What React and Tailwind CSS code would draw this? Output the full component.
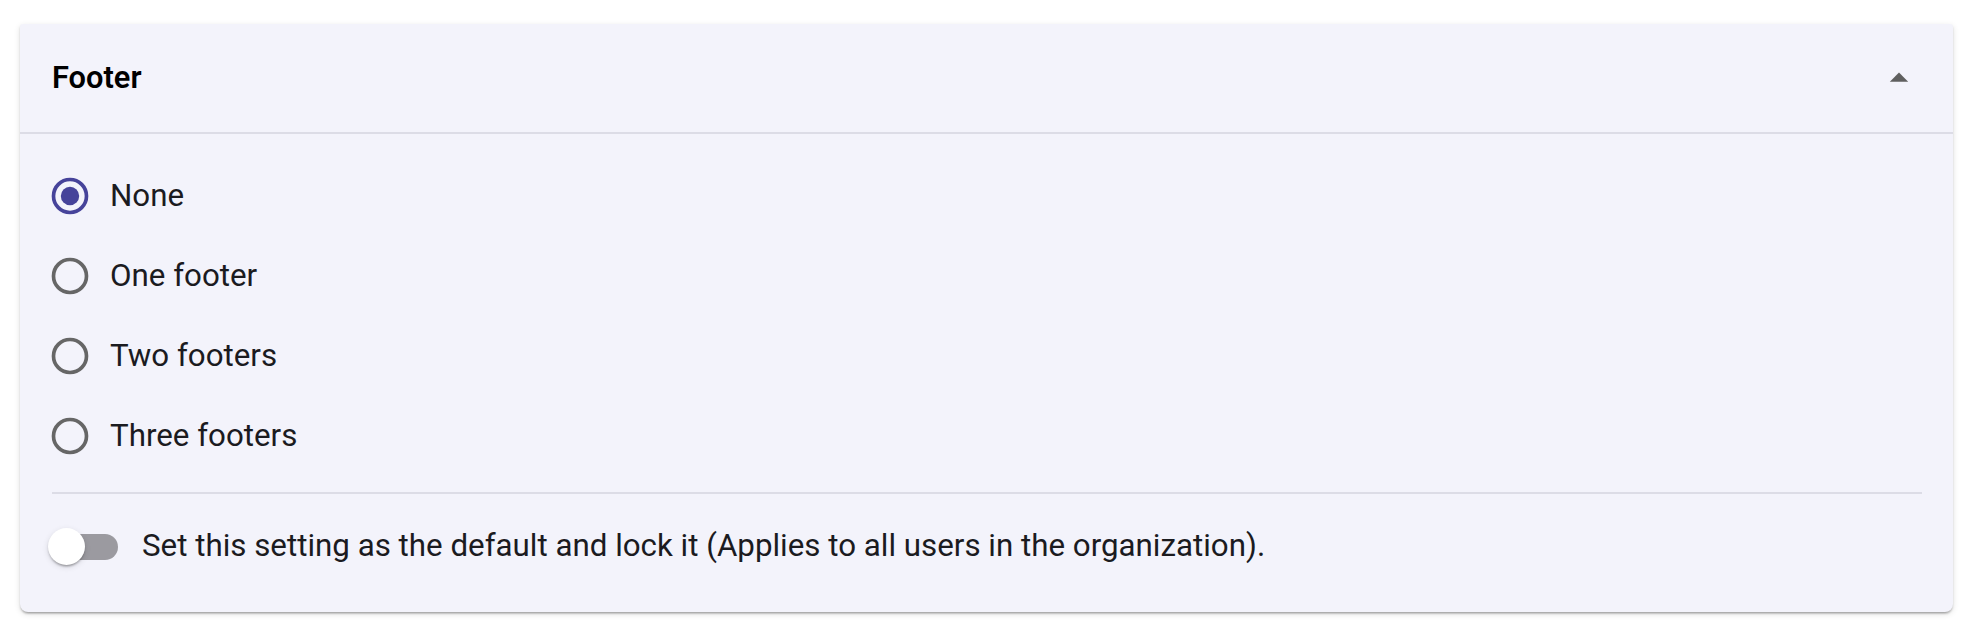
import { useState } from "react";

const options = ["None", "One footer", "Two footers", "Three footers"];

function RadioIcon({ checked }) {
  return (
    <svg viewBox="0 0 24 24" className="w-[44px] h-[44px] shrink-0">
      <circle
        cx="12"
        cy="12"
        r="9"
        fill="none"
        stroke={checked ? "#46439a" : "#666666"}
        strokeWidth="2"
      />
      {checked && <circle cx="12" cy="12" r="5" fill="#46439a" />}
    </svg>
  );
}

export default function App() {
  const [value, setValue] = useState("None");
  const [locked, setLocked] = useState(false);
  const [open, setOpen] = useState(true);

  return (
    <div className="min-h-screen bg-white pt-[24px] pl-[20px] pr-[23px] font-['Roboto','Liberation_Sans',sans-serif] text-[#1b1b1f]">
      <div className="bg-[#f3f3fb] rounded-t-[3px] rounded-b-[8px] shadow-[0_3px_2px_-2px_rgba(0,0,0,0.2),0_2px_2px_0_rgba(0,0,0,0.14),0_2px_6px_0_rgba(0,0,0,0.12)]">
        <button
          onClick={() => setOpen(!open)}
          className="w-full h-[110px] flex items-center justify-between pl-[32px] pr-[32px] border-b-2 border-[#dcdce6]"
        >
          <span className="text-[30.8px] font-semibold text-black">Footer</span>
          <svg viewBox="0 0 24 24" className="w-[44px] h-[44px]">
            <path d={open ? "m7 14 5-5 5 5z" : "m7 10 5 5 5-5z"} fill="#5f5f5f" />
          </svg>
        </button>

        {open && (
          <div className="pt-[22px] pb-[29px]">
            <div className="flex flex-col pl-[28px]">
              {options.map((opt) => (
                <label
                  key={opt}
                  onClick={() => setValue(opt)}
                  className="h-[80px] flex items-center gap-[18px] cursor-pointer"
                >
                  <RadioIcon checked={value === opt} />
                  <span className="text-[31.3px]">{opt}</span>
                </label>
              ))}
            </div>

            <div className="mt-[16px] ml-[32px] mr-[31px] h-[2px] bg-[#dcdce6]" />

            <div className="mt-[15px] h-[74px] flex items-center gap-[24px] pl-[28px]">
              <button
                onClick={() => setLocked(!locked)}
                className="relative w-[70px] h-[37px] shrink-0"
              >
                <span
                  className={
                    locked
                      ? "absolute left-[7px] top-[6px] w-[63px] h-[26px] rounded-full bg-[#a9a6dc]"
                      : "absolute left-[7px] top-[6px] w-[63px] h-[26px] rounded-full bg-[#9b9aa0]"
                  }
                />
                <span
                  className={
                    locked
                      ? "absolute left-[33px] top-0 w-[37px] h-[37px] rounded-full bg-[#46439a] shadow-[0_2px_2px_-1px_rgba(0,0,0,0.2),0_1px_2px_0_rgba(0,0,0,0.14),0_1px_5px_0_rgba(0,0,0,0.12)]"
                      : "absolute left-0 top-0 w-[37px] h-[37px] rounded-full bg-white shadow-[0_3px_2px_-2px_rgba(0,0,0,0.2),0_2px_2px_0_rgba(0,0,0,0.14),0_2px_6px_0_rgba(0,0,0,0.12)]"
                  }
                />
              </button>
              <span className="text-[31.3px]">
                Set this setting as the default and lock it (Applies to all users in the organization).
              </span>
            </div>
          </div>
        )}
      </div>
    </div>
  );
}
